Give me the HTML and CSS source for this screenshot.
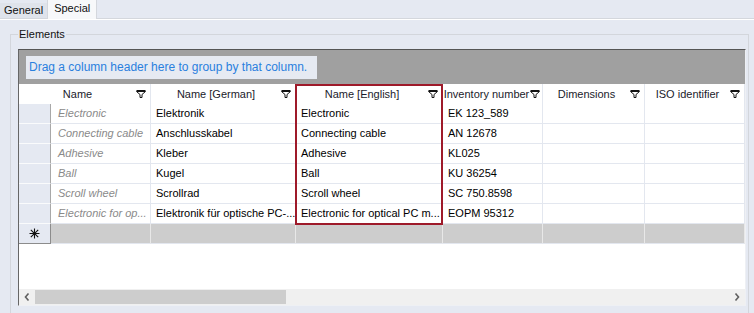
FILE: index.html
```html
<!DOCTYPE html>
<html>
<head>
	<meta charset="utf-8">
	<title>Special - Elements</title>
	<link rel="stylesheet" href="styles.css">
</head>
<body>

<div class="tabs">
	<div class="tab">General</div>
	<div class="tab active">Special</div>
</div>

<div class="page">
	<fieldset class="elements">
		<legend>Elements</legend>
		<div class="grid">
			<div class="group-panel"><span class="group-hint">Drag a column header here to group by that column.</span></div>

			<div class="rows">
				<div class="hcell first"><span class="label">Name</span><svg class="filter" width="10" height="8" viewBox="0 0 10 8"><path d="M0.5 0.5H9.5M0.5 1.5H9.5L6 4.5V7.5H4V4.5L0.5 1.5" fill="none" stroke="#111"/></svg></div>
				<div class="hcell"><span class="label">Name [German]</span><svg class="filter" width="10" height="8" viewBox="0 0 10 8"><path d="M0.5 0.5H9.5M0.5 1.5H9.5L6 4.5V7.5H4V4.5L0.5 1.5" fill="none" stroke="#111"/></svg></div>
				<div class="hcell"><span class="label">Name [English]</span><svg class="filter" width="10" height="8" viewBox="0 0 10 8"><path d="M0.5 0.5H9.5M0.5 1.5H9.5L6 4.5V7.5H4V4.5L0.5 1.5" fill="none" stroke="#111"/></svg></div>
				<div class="hcell"><span class="label">Inventory number</span><svg class="filter tight" width="10" height="8" viewBox="0 0 10 8"><path d="M0.5 0.5H9.5M0.5 1.5H9.5L6 4.5V7.5H4V4.5L0.5 1.5" fill="none" stroke="#111"/></svg></div>
				<div class="hcell"><span class="label">Dimensions</span><svg class="filter" width="10" height="8" viewBox="0 0 10 8"><path d="M0.5 0.5H9.5M0.5 1.5H9.5L6 4.5V7.5H4V4.5L0.5 1.5" fill="none" stroke="#111"/></svg></div>
				<div class="hcell"><span class="label">ISO identifier</span><svg class="filter" width="10" height="8" viewBox="0 0 10 8"><path d="M0.5 0.5H9.5M0.5 1.5H9.5L6 4.5V7.5H4V4.5L0.5 1.5" fill="none" stroke="#111"/></svg></div>

				<div class="rhead"></div>
				<div class="cell key">Electronic</div>
				<div class="cell">Elektronik</div>
				<div class="cell">Electronic</div>
				<div class="cell">EK 123_589</div>
				<div class="cell"></div>
				<div class="cell"></div>

				<div class="rhead"></div>
				<div class="cell key">Connecting cable</div>
				<div class="cell">Anschlusskabel</div>
				<div class="cell">Connecting cable</div>
				<div class="cell">AN 12678</div>
				<div class="cell"></div>
				<div class="cell"></div>

				<div class="rhead"></div>
				<div class="cell key">Adhesive</div>
				<div class="cell">Kleber</div>
				<div class="cell">Adhesive</div>
				<div class="cell">KL025</div>
				<div class="cell"></div>
				<div class="cell"></div>

				<div class="rhead"></div>
				<div class="cell key">Ball</div>
				<div class="cell">Kugel</div>
				<div class="cell">Ball</div>
				<div class="cell">KU 36254</div>
				<div class="cell"></div>
				<div class="cell"></div>

				<div class="rhead"></div>
				<div class="cell key">Scroll wheel</div>
				<div class="cell">Scrollrad</div>
				<div class="cell">Scroll wheel</div>
				<div class="cell">SC 750.8598</div>
				<div class="cell"></div>
				<div class="cell"></div>

				<div class="rhead"></div>
				<div class="cell key cut">Electronic for op...</div>
				<div class="cell cut">Elektronik für optische PC-...</div>
				<div class="cell cut">Electronic for optical PC m...</div>
				<div class="cell">EOPM 95312</div>
				<div class="cell"></div>
				<div class="cell"></div>

				<div class="rhead newrow"><svg width="11" height="11" viewBox="0 0 11 11"><path d="M5.5 0.5V10.5M0.5 5.5H10.5M1.8 1.8L9.2 9.2M9.2 1.8L1.8 9.2" stroke="#111" stroke-width="1.1"/></svg></div>
				<div class="cell new"></div>
				<div class="cell new"></div>
				<div class="cell new"></div>
				<div class="cell new"></div>
				<div class="cell new"></div>
				<div class="cell new"></div>
			</div>

			<div class="filler"></div>

			<div class="hscroll">
				<div class="sbtn"><svg width="6" height="8" viewBox="0 0 6 8"><path d="M4.5 0.5L1.5 4L4.5 7.5" fill="none" stroke="#606060" stroke-width="1.6"/></svg></div>
				<div class="thumb"></div>
				<div class="track"></div>
				<div class="sbtn"><svg width="6" height="8" viewBox="0 0 6 8"><path d="M1.5 0.5L4.5 4L1.5 7.5" fill="none" stroke="#606060" stroke-width="1.6"/></svg></div>
			</div>

			<div class="focus-col"></div>
		</div>
	</fieldset>
</div>

</body>
</html>
```

FILE: styles.css
```css
body {
	margin: 0;
	background: #e5e9f2;
	overflow: hidden;
	font-family: "Liberation Sans", Arial, sans-serif;
	font-size: 11px;
	color: #000;
}

/* tab strip */
.tabs {
	display: flex;
	align-items: flex-end;
	height: 18px;
	border-bottom: 1px solid #d4d7dd;
}
.tab {
	height: 15px;
	line-height: 15px;
	padding: 0 4px;
	background: #dfe3eb;
	color: #111;
}
.tab.active {
	height: 19px;
	line-height: 17px;
	padding: 0 6px;
	margin-bottom: -1px;
	background: #f7f8fa;
	border-left: 1px solid #d4d7dd;
	border-right: 1px solid #d4d7dd;
}

.page {
	border-top: 1px solid #fff;
}

.elements {
	margin: 7px 5px 0 10px;
	padding: 8px 2px 10px 7px;
	border: 1px solid #d3d6dc;
	min-width: 0;
}
.elements legend {
	padding: 0 1px;
	line-height: 14px;
	color: #111;
}

/* grid */
.grid {
	position: relative;
	background: #fff;
	border-top: 1px solid #555;
	border-left: 1px solid #666;
	border-right: 1px solid #eef0f4;
	border-bottom: 1px solid #eef0f4;
}
.group-panel {
	height: 34px;
	padding: 6px 0 0 7px;
	box-sizing: border-box;
	background: #a0a0a0;
}
.group-hint {
	display: inline-block;
	height: 23px;
	line-height: 23px;
	padding: 0 10px 0 3px;
	background: #e6eaf2;
	color: #2a80de;
	font-size: 12px;
}

.rows {
	display: grid;
	grid-template-columns: 32px 100px 145px 147px 100px 102px 100px;
	grid-auto-rows: 20px;
}
.hcell {
	display: flex;
	align-items: center;
	border-right: 1px solid #e3e7ef;
	background: #fff;
	color: #1b1b2b;
	overflow: hidden;
}
.hcell.first {
	grid-column: span 2;
}
.hcell .label {
	flex: 1;
	text-align: center;
	white-space: nowrap;
	overflow: hidden;
}
.hcell .filter {
	flex: none;
	margin-right: 4px;
}
.hcell .filter.tight {
	margin-right: 2px;
}

.cell {
	padding: 0 5px;
	line-height: 19px;
	border-right: 1px solid #e3e7ef;
	border-bottom: 1px solid #e3e7ef;
	white-space: nowrap;
	overflow: hidden;
	text-overflow: ellipsis;
}
.cell.cut {
	padding-right: 0;
	text-overflow: clip;
}
.cell.key {
	padding-left: 7px;
	font-style: italic;
	color: #8a8a8a;
}
.cell.new {
	background: #cdcdcd;
	border-right-color: #e8e8e8;
}
.rhead {
	background: #e5e9f2;
	border-right: 1px solid #a8a8a8;
	border-bottom: 1px solid #fafbfc;
}
.rhead.newrow {
	display: flex;
	align-items: center;
	justify-content: center;
	border-right-color: #8c8c8c;
	border-bottom-color: #8c8c8c;
	box-sizing: border-box;
}

.filler {
	height: 45px;
}

.hscroll {
	display: flex;
	height: 16px;
	background: #f0f0f0;
}
.sbtn {
	width: 16px;
	display: flex;
	align-items: center;
	justify-content: center;
}
.thumb {
	width: 251px;
	margin: 1px 0;
	background: #cdcdcd;
}
.track {
	flex: 1;
}

/* highlighted column */
.focus-col {
	position: absolute;
	left: 276px;
	top: 34px;
	width: 148px;
	height: 141px;
	box-sizing: border-box;
	border: 2px solid #9e1a2a;
	pointer-events: none;
}
```
